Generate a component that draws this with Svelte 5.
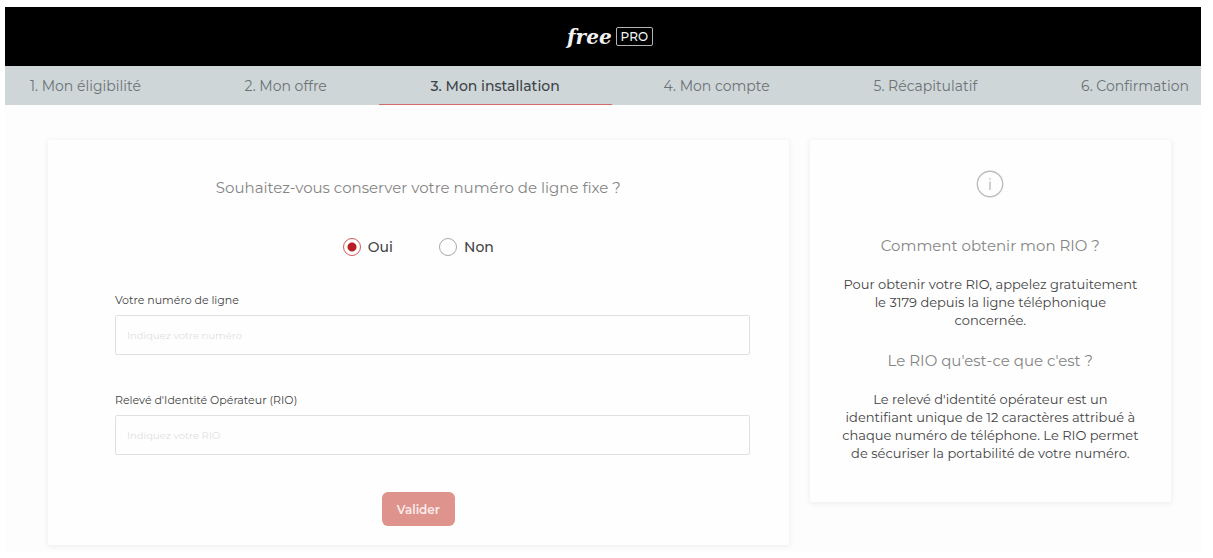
<script lang="ts">
  const steps = [
    'Mon éligibilité',
    'Mon offre',
    'Mon installation',
    'Mon compte',
    'Récapitulatif',
    'Confirmation',
  ];
  const current = 2;

  let keepNumber = $state('oui');
  let phone      = $state('');
  let rio        = $state('');

  function submit(e: SubmitEvent) {
    e.preventDefault();
  }
</script>

<div class="page">
  <header>
    <a class="logo" href="#accueil" aria-label="Free Pro">
      <span class="logo-free">free</span>
      <span class="logo-pro">PRO</span>
    </a>
  </header>

  <nav>
    <ol>
      {#each steps as step, i}
        <li class:active={i === current}>
          <a href="#etape-{i + 1}" aria-current={i === current ? 'step' : undefined}>{i + 1}. {step}</a>
        </li>
      {/each}
    </ol>
  </nav>

  <main>
    <form class="card form-card" onsubmit={submit}>
      <h1 id="question">Souhaitez-vous conserver votre numéro de ligne fixe ?</h1>

      <div class="choices" role="radiogroup" aria-labelledby="question">
        <label><input type="radio" name="keep" value="oui" bind:group={keepNumber} /> Oui</label>
        <label><input type="radio" name="keep" value="non" bind:group={keepNumber} /> Non</label>
      </div>

      <div class="field">
        <label for="phone">Votre numéro de ligne</label>
        <input id="phone" type="text" bind:value={phone} placeholder="Indiquez votre numéro" />
      </div>
      <div class="field">
        <label for="rio">Relevé d'Identité Opérateur (RIO)</label>
        <input id="rio" type="text" bind:value={rio} placeholder="Indiquez votre RIO" />
      </div>

      <button type="submit">Valider</button>
    </form>

    <aside class="card info-card">
      <svg width="28" height="28" viewBox="0 0 28 28" fill="none" stroke="#bdbdbd" aria-hidden="true">
        <circle cx="14" cy="14" r="12.7" stroke-width="1.4" />
        <path d="M14 11.5V20M14 8V9.6" stroke-width="1.4" />
      </svg>
      <h2>Comment obtenir mon RIO ?</h2>
      <p>Pour obtenir votre RIO, appelez gratuitement le 3179 depuis la ligne téléphonique concernée.</p>
      <h2>Le RIO qu'est-ce que c'est ?</h2>
      <p>Le relevé d'identité opérateur est un identifiant unique de 12 caractères attribué à chaque numéro de téléphone. Le RIO permet de sécuriser la portabilité de votre numéro.</p>
    </aside>
  </main>
</div>

<style>
  :global(body) { background: #fff; }
  .page {
    margin: 7px 12px 0 5px;
    padding-bottom: 7px;
    background: #fdfdfd;
    font-family: Montserrat, Inter, sans-serif;
    color: #434343;
  }
  header {
    display: flex; align-items: center; justify-content: center;
    height: 59px; background: #000;
  }
  .logo {
    display: flex; align-items: center; gap: 4px;
    margin-left: 14px;
    color: #f2f2f2; text-decoration: none;
  }
  .logo-free {
    font-family: "DejaVu Serif", serif; font-size: 20px; line-height: 22px;
    font-style: italic; font-weight: 700;
  }
  .logo-pro {
    border: 1px solid #b4b4b4; border-radius: 2px;
    padding: 0 4px;
    font-size: 12px; line-height: 17px; font-weight: 500;
  }
  nav { background: #ced6d8; }
  ol {
    display: flex; list-style: none;
    margin: 0; padding: 0 12px 0 25px;
  }
  li { flex: 2 0 auto; text-align: center; }
  li:first-child { flex-grow: 1; text-align: left; }
  li:last-child { flex-grow: 1; text-align: right; }
  li a {
    display: block; box-sizing: border-box; height: 39px;
    border-bottom: 1px solid transparent;
    font-size: 14px; line-height: 40px;
    color: #6c7276; text-decoration: none;
  }
  li.active a { color: #3d4347; font-weight: 500; border-color: #cf6e68; }
  main {
    display: grid; grid-template-columns: 41fr 20fr; gap: 21px;
    align-items: start;
    padding: 35px 30px 0 43px;
  }
  .card {
    background: #fefefe; border-radius: 2px;
    box-shadow: 0 1px 5px 1px rgba(0,0,0,.06);
  }
  .form-card {
    display: flex; flex-direction: column;
    padding: 38px 39px 19px 67px;
  }
  h1, h2 {
    margin: 0; text-align: center;
    font-size: 15px; line-height: 20px; font-weight: 400;
    color: #858585;
  }
  h1 { margin-right: 28px; }
  .choices {
    display: flex; justify-content: center; gap: 46px;
    margin: 39px 28px 35px 0;
  }
  .choices label {
    display: flex; align-items: center; gap: 7px;
    font-size: 14px; line-height: 20px; font-weight: 500;
  }
  .choices input {
    appearance: none; box-sizing: border-box;
    width: 18px; height: 18px; margin: 0;
    border: 1px solid #a8a8a8; border-radius: 50%;
    background: #fff;
  }
  .choices input:checked {
    border-color: #cf5a5a;
    background: radial-gradient(circle, #b81f24 4px, #fff 5px);
  }
  .field { display: flex; flex-direction: column; gap: 7px; margin-bottom: 37px; }
  .field label { font-size: 11px; line-height: 16px; }
  .field input {
    box-sizing: border-box; width: 100%; height: 40px;
    padding: 0 11px; border: 1px solid #e0e0e0; border-radius: 2px;
    background: #fefefe; color: #434343;
    font-family: inherit; font-size: 10px;
  }
  .field input::placeholder { color: #dedede; opacity: 1; }
  button {
    align-self: center; margin-right: 28px;
    height: 34px; padding: 0 15px;
    border: none; border-radius: 6px;
    background: #de938d; color: #fbeceb;
    font-family: inherit; font-size: 12px; font-weight: 600;
    cursor: pointer;
  }
  .info-card {
    display: flex; flex-direction: column; align-items: center;
    padding: 30px 32px 40px;
  }
  .info-card h2 { margin-top: 22px; }
  .info-card svg + h2 { margin-top: 38px; }
  p {
    margin: 19px 0 0; text-align: center;
    font-size: 13px; line-height: 18px;
  }
</style>
